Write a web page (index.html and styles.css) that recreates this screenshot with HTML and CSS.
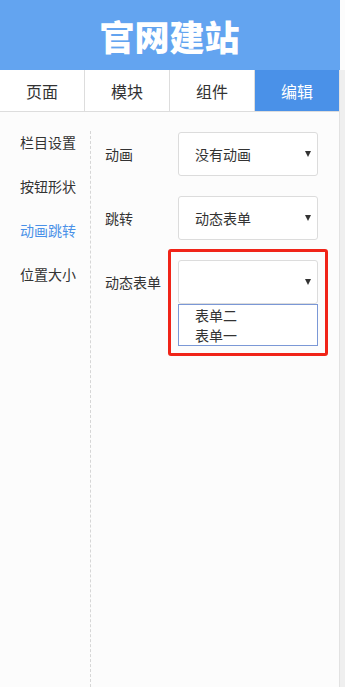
FILE: index.html
```html
<!DOCTYPE html>
<html lang="zh">
<head>
<meta charset="utf-8">
<link rel="stylesheet" href="styles.css">
</head>
<body>
<header class="header"><h1 class="title">官网建站</h1></header>
<div class="frame">
  <div class="main">
    <nav class="tabs">
      <div class="tab">页面</div>
      <div class="tab">模块</div>
      <div class="tab">组件</div>
      <div class="tab active">编辑</div>
    </nav>
    <div class="body">
      <aside class="side">
        <div class="side-item">栏目设置</div>
        <div class="side-item">按钮形状</div>
        <div class="side-item current">动画跳转</div>
        <div class="side-item">位置大小</div>
      </aside>
      <section class="form">
        <div class="row">
          <div class="label">动画</div>
          <div class="group">
            <div class="select"><span>没有动画</span><span class="arrow"></span></div>
          </div>
        </div>
        <div class="row">
          <div class="label">跳转</div>
          <div class="group">
            <div class="select"><span>动态表单</span><span class="arrow"></span></div>
          </div>
        </div>
        <div class="row">
          <div class="label">动态表单</div>
          <div class="group open">
            <div class="select"><span></span><span class="arrow"></span></div>
            <ul class="list">
              <li>表单二</li>
              <li>表单一</li>
            </ul>
          </div>
        </div>
      </section>
    </div>
  </div>
  <div class="scroll"></div>
</div>
</body>
</html>
```
FILE: styles.css
```css
* { box-sizing: border-box; }
html, body { margin: 0; padding: 0; }
body {
  width: 345px;
  height: 687px;
  overflow: hidden;
  background: #fcfcfc;
  font-family: "Noto Sans CJK SC", "Noto Sans", sans-serif;
  color: #333;
}
.header {
  width: 340px;
  height: 70px;
  background: #63a4f0;
  display: flex;
  align-items: center;
  justify-content: center;
}
.title {
  margin: 0;
  color: #fff;
  font-size: 35px;
  font-weight: 900;
  line-height: 1;
  padding-right: 1px;
}
.frame {
  display: flex;
  height: 617px;
}
.main {
  width: 339px;
  display: flex;
  flex-direction: column;
}
.scroll {
  width: 6px;
  background: #efefef;
  border-left: 1px solid #e2e2e2;
}
.tabs {
  display: flex;
  height: 42px;
  background: #fff;
  border-bottom: 1px solid #ddd;
}
.tab {
  flex: 1;
  display: flex;
  align-items: center;
  justify-content: center;
  font-size: 16px;
  color: #333;
  border-right: 1px solid #ddd;
}
.tab:last-child { border-right: 0; }
.tab.active {
  background: #4a91e8;
  color: #fff;
}
.body {
  flex: 1;
  display: flex;
  margin-top: 19px;
}
.side {
  width: 91px;
  border-right: 1px dashed #d6d6d6;
  padding-left: 20px;
}
.side-item {
  height: 22px;
  line-height: 22px;
  font-size: 14px;
  margin-bottom: 22px;
  color: #333;
}
.side-item.current { color: #4a91e8; }
.form {
  flex: 1;
  padding-left: 14px;
  padding-top: 1px;
}
.row {
  display: flex;
  align-items: flex-start;
  margin-bottom: 20px;
}
.label {
  width: 73px;
  height: 44px;
  line-height: 44px;
  font-size: 14px;
  color: #333;
}
.group {
  width: 140px;
  position: relative;
}
.group.open::after {
  content: "";
  position: absolute;
  top: -11px;
  left: -10px;
  right: -10px;
  bottom: -10px;
  border: 3px solid #f02418;
  border-radius: 3px;
  pointer-events: none;
}
.select {
  height: 44px;
  background: #fff;
  border: 1px solid #dcdcdc;
  border-radius: 3px;
  display: flex;
  align-items: center;
  justify-content: space-between;
  padding: 0 6px 0 16px;
  font-size: 14px;
  color: #333;
}
.arrow {
  width: 0;
  height: 0;
  border-left: 3.5px solid transparent;
  border-right: 3.5px solid transparent;
  border-top: 6px solid #333;
}
.list {
  list-style: none;
  margin: 0;
  padding: 0 0 0 16px;
  background: #fff;
  border: 1px solid #7b98d6;
  font-size: 14px;
  line-height: 20px;
  color: #333;
}
```
